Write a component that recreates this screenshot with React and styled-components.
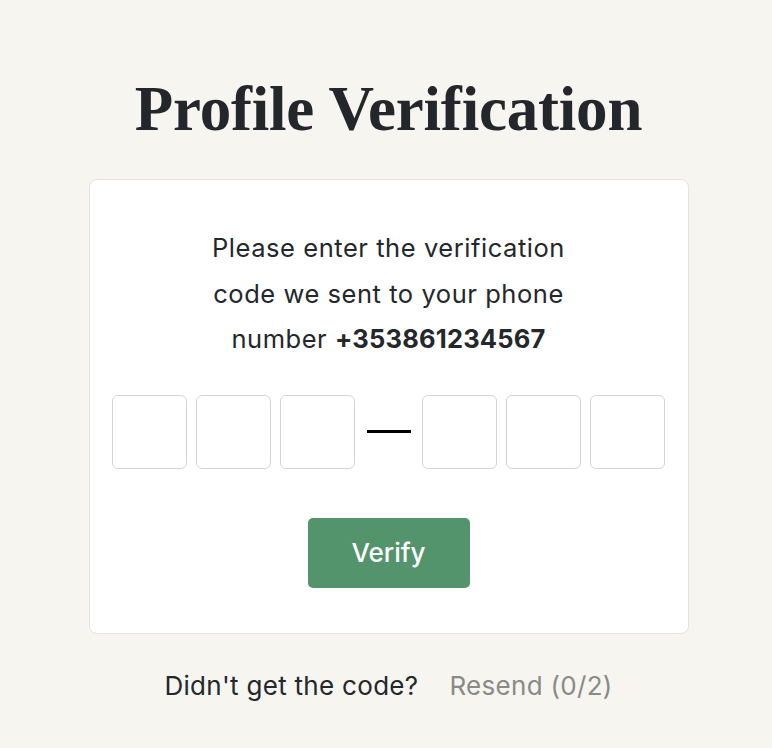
import React from "react";
import styled, { createGlobalStyle } from "styled-components";

const Global = createGlobalStyle`
  html, body { margin: 0; padding: 0; background: #f6f5f0; }
  body { font-family: Inter, "Noto Sans", sans-serif; color: #24272b; }
`;

const Page = styled.main`
  min-height: 748px;
  display: flex;
  flex-direction: column;
  align-items: center;
  padding: 72px 0 0 5px;
  box-sizing: border-box;
`;

const Title = styled.h1`
  margin: 0;
  font-family: "Liberation Serif", "Times New Roman", serif;
  font-weight: 700;
  font-size: 63px;
  line-height: 74px;
  letter-spacing: -0.2px;
  color: #23272b;
`;

const Card = styled.section`
  margin-top: 33px;
  width: 600px;
  box-sizing: border-box;
  background: #ffffff;
  border: 1px solid #e4e3de;
  border-radius: 8px;
  padding: 45px 0 45px;
  display: flex;
  flex-direction: column;
  align-items: center;
`;

const Message = styled.p`
  margin: 0;
  text-align: center;
  font-size: 25.5px;
  line-height: 45.5px;
  letter-spacing: 0.55px;
  color: #24272b;
`;

const Line = styled.span`
  display: block;
`;

const Phone = styled.strong`
  font-weight: 700;
  letter-spacing: 0.2px;
`;

const CodeRow = styled.div`
  margin-top: 33px;
  display: flex;
  align-items: center;
`;

const Group = styled.div`
  display: flex;
  gap: 9px;
`;

const Digit = styled.input`
  width: 75px;
  height: 74px;
  box-sizing: border-box;
  border: 1px solid #d3d4d8;
  border-radius: 6px;
  background: #fff;
  font-family: inherit;
  font-size: 28px;
  text-align: center;
  outline: none;
  padding: 0;
`;

const Dash = styled.span`
  width: 44px;
  height: 3px;
  background: #000;
  margin: 0 11px 0 12px;
`;

const Button = styled.button`
  margin-top: 49px;
  width: 162px;
  height: 70px;
  border: none;
  border-radius: 5px;
  background: #54946c;
  color: #fff;
  font-family: Inter, "Noto Sans", sans-serif;
  font-size: 26px;
  font-weight: 500;
  cursor: pointer;
`;

const Footer = styled.p`
  margin: 37px 0 0;
  display: flex;
  gap: 31px;
  font-size: 26px;
  line-height: 30px;
  letter-spacing: 0.3px;
`;

const Muted = styled.span`
  color: #8a8a86;
`;

export default function App() {
  return (
    <>
      <Global />
      <Page>
        <Title>Profile Verification</Title>
        <Card>
          <Message>
            <Line>Please enter the verification</Line>
            <Line>code we sent to your phone</Line>
            <Line>
              number <Phone>+353861234567</Phone>
            </Line>
          </Message>
          <CodeRow>
            <Group>
              <Digit maxLength={1} />
              <Digit maxLength={1} />
              <Digit maxLength={1} />
            </Group>
            <Dash />
            <Group>
              <Digit maxLength={1} />
              <Digit maxLength={1} />
              <Digit maxLength={1} />
            </Group>
          </CodeRow>
          <Button>Verify</Button>
        </Card>
        <Footer>
          <span>Didn't get the code?</span>
          <Muted>Resend (0/2)</Muted>
        </Footer>
      </Page>
    </>
  );
}
